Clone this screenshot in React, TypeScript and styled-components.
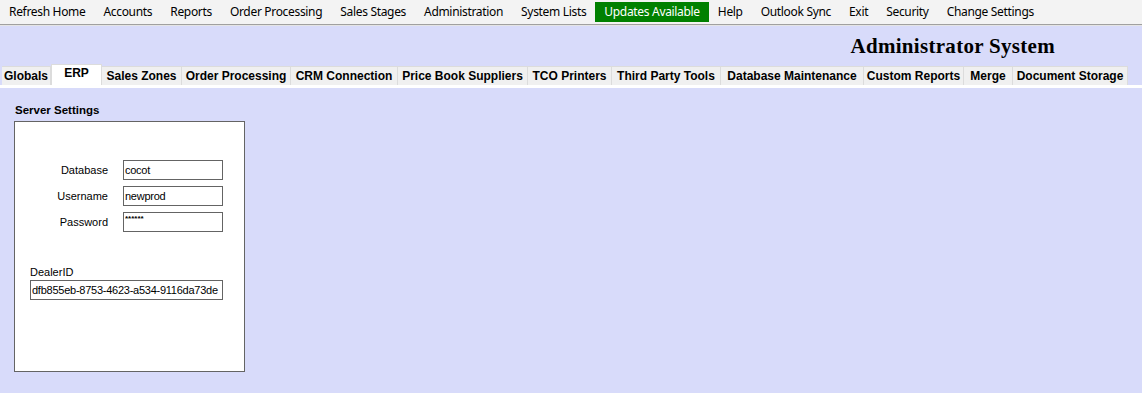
import React from "react";
import styled, { createGlobalStyle } from "styled-components";

const lavender = "#d8dbfa";

const menuItems = [
  "Refresh Home",
  "Accounts",
  "Reports",
  "Order Processing",
  "Sales Stages",
  "Administration",
  "System Lists",
  "Updates Available",
  "Help",
  "Outlook Sync",
  "Exit",
  "Security",
  "Change Settings",
];

const tabs = [
  { label: "Globals", width: 49 },
  { label: "ERP", width: 51 },
  { label: "Sales Zones", width: 80 },
  { label: "Order Processing", width: 109 },
  { label: "CRM Connection", width: 107 },
  { label: "Price Book Suppliers", width: 130 },
  { label: "TCO Printers", width: 84 },
  { label: "Third Party Tools", width: 109 },
  { label: "Database Maintenance", width: 143 },
  { label: "Custom Reports", width: 100 },
  { label: "Merge", width: 49 },
  { label: "Document Storage", width: 115 },
];

export default () => {
  return (
    <>
      <GlobalStyle />
      <Layout>
        <MenuBar>
          {menuItems.map((item) => (
            <MenuItem key={item} $highlight={item === "Updates Available"}>
              {item}
            </MenuItem>
          ))}
        </MenuBar>
        <Header>
          <Title>Administrator System</Title>
        </Header>
        <TabStrip>
          {tabs.map((t) => (
            <Tab key={t.label} $width={t.width} $selected={t.label === "ERP"}>
              {t.label}
            </Tab>
          ))}
        </TabStrip>
        <TabEdge />
        <TabPage>
          <GroupTitle>Server Settings</GroupTitle>
          <GroupBox>
            <FieldGrid>
              <FieldLabel>Database</FieldLabel>
              <TextBox readOnly defaultValue="cocot" />
              <FieldLabel>Username</FieldLabel>
              <TextBox readOnly defaultValue="newprod" />
              <FieldLabel>Password</FieldLabel>
              <TextBox readOnly defaultValue="******" $masked />
            </FieldGrid>
            <DealerBlock>
              <DealerLabel>DealerID</DealerLabel>
              <TextBox
                readOnly
                defaultValue="dfb855eb-8753-4623-a534-9116da73de"
                $wide
              />
            </DealerBlock>
          </GroupBox>
        </TabPage>
      </Layout>
    </>
  );
};

const GlobalStyle = createGlobalStyle`
  html, body {
    margin: 0;
    padding: 0;
    background: ${lavender};
  }
  * {
    box-sizing: border-box;
  }
`;

const Layout = styled.div`
  width: 1142px;
  height: 393px;
  display: flex;
  flex-direction: column;
  background: ${lavender};
  overflow: hidden;
`;

const MenuBar = styled.div`
  height: 25px;
  display: flex;
  align-items: center;
  background: #f3f3f3;
  border-bottom: 1px solid #a0a0a0;
  box-shadow: 0 1px 0 #e4e4e4;
  font-family: "Noto Sans", "Open Sans", sans-serif;
  font-size: 12px;
  letter-spacing: -0.32px;
  color: #000;
`;

const MenuItem = styled.div<{ $highlight?: boolean }>`
  height: 20px;
  line-height: 20px;
  padding: 0 9px;
  white-space: nowrap;
  background: ${(p) => (p.$highlight ? "#008000" : "transparent")};
  color: ${(p) => (p.$highlight ? "#fff" : "#000")};
`;

const Header = styled.div`
  height: 38px;
  display: flex;
  justify-content: flex-end;
  align-items: center;
  padding: 2px 87px 0 0;
  margin-top: 1px;
`;

const Title = styled.h1`
  margin: 0;
  font-family: "Liberation Serif", "Times New Roman", serif;
  font-weight: bold;
  font-size: 21px;
  letter-spacing: 0.3px;
  color: #000;
`;

const TabStrip = styled.div`
  height: 21px;
  display: flex;
  align-items: flex-end;
  padding-left: 2px;
`;

const Tab = styled.div<{ $width: number; $selected?: boolean }>`
  width: ${(p) => p.$width}px;
  height: ${(p) => (p.$selected ? 21 : 19)}px;
  display: flex;
  align-items: ${(p) => (p.$selected ? "flex-start" : "center")};
  justify-content: center;
  padding-top: ${(p) => (p.$selected ? 1 : 0)}px;
  background: ${(p) => (p.$selected ? "#fff" : "#f0f0f0")};
  border: 1px solid #dcdcdc;
  border-bottom: none;
  border-left-width: ${(p) => (p.$selected ? 1 : 0)}px;
  font-family: "Liberation Sans", Arial, sans-serif;
  font-weight: bold;
  font-size: 12px;
  color: #000;
  white-space: nowrap;
`;

const TabEdge = styled.div`
  height: 3px;
  background: #fff;
`;

const TabPage = styled.div`
  flex: 1;
  margin-left: 3px;
  padding: 15px 0 0 11px;
  background: ${lavender};
  font-family: "Liberation Sans", Arial, sans-serif;
  font-size: 11px;
  color: #000;
`;

const GroupTitle = styled.div`
  font-weight: bold;
  font-size: 11.5px;
  height: 18px;
  line-height: 15px;
  padding-left: 1px;
`;

const GroupBox = styled.div`
  width: 231px;
  height: 251px;
  background: #fff;
  border: 1px solid #646464;
  padding: 38px 0 0 15px;
`;

const FieldGrid = styled.div`
  display: grid;
  grid-template-columns: 78px 100px;
  column-gap: 15px;
  row-gap: 6px;
  align-items: center;
`;

const FieldLabel = styled.div`
  text-align: right;
  line-height: 20px;
`;

const TextBox = styled.input<{ $wide?: boolean; $masked?: boolean }>`
  width: ${(p) => (p.$wide ? 193 : 100)}px;
  height: 20px;
  border: 1px solid #646464;
  padding: 0 1px;
  margin: 0;
  font-family: "Liberation Sans", Arial, sans-serif;
  font-size: ${(p) => (p.$masked ? 8 : 11)}px;
  letter-spacing: ${(p) => (p.$masked ? 0 : -0.25)}px;
  line-height: ${(p) => (p.$masked ? "10px" : "18px")};
  color: #000;
  background: #fff;
  outline: none;
  ${(p) => (p.$masked ? "padding-bottom: 8px; font-weight: bold;" : "")}
`;

const DealerBlock = styled.div`
  margin-top: 33px;
`;

const DealerLabel = styled.div`
  line-height: 15px;
`;
